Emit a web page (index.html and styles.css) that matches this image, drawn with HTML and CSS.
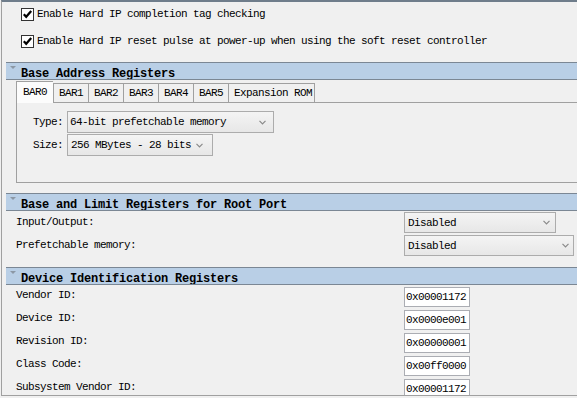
FILE: index.html
```html
<!DOCTYPE html>
<html lang="en">
<head>
    <meta charset="UTF-8" />
    <title>Hard IP Parameters</title>
    <link rel="stylesheet" href="styles.css">
</head>
<body>
    <div class="frame">
        <div class="checks">
            <label class="check">
                <svg class="box" width="13" height="13" viewBox="0 0 13 13"><rect x="0.5" y="0.5" width="12" height="12" fill="#fff" stroke="#333"/><path d="M2.8 6.2 L5.2 8.8 L10.2 3" fill="none" stroke="#000" stroke-width="2.2"/></svg>
                Enable Hard IP completion tag checking
            </label>
            <label class="check">
                <svg class="box" width="13" height="13" viewBox="0 0 13 13"><rect x="0.5" y="0.5" width="12" height="12" fill="#fff" stroke="#333"/><path d="M2.8 6.2 L5.2 8.8 L10.2 3" fill="none" stroke="#000" stroke-width="2.2"/></svg>
                Enable Hard IP reset pulse at power-up when using the soft reset controller
            </label>
        </div>

        <section class="group">
            <div class="group-head"><span class="twisty"></span>Base Address Registers</div>
            <div class="tabs">
                <span class="tab active">BAR0</span>
                <span class="tab">BAR1</span>
                <span class="tab">BAR2</span>
                <span class="tab">BAR3</span>
                <span class="tab">BAR4</span>
                <span class="tab">BAR5</span>
                <span class="tab">Expansion ROM</span>
            </div>
            <div class="tab-panel">
                <div class="field">
                    <span>Type:</span>
                    <div class="select select-type">64-bit prefetchable memory<svg width="7" height="5" viewBox="0 0 7 5"><path d="M0.5 0.8 L3.5 3.8 L6.5 0.8" fill="none" stroke="#8a8a8a" stroke-width="1.2"/></svg></div>
                </div>
                <div class="field">
                    <span>Size:</span>
                    <div class="select select-size">256 MBytes - 28 bits<svg width="7" height="5" viewBox="0 0 7 5"><path d="M0.5 0.8 L3.5 3.8 L6.5 0.8" fill="none" stroke="#8a8a8a" stroke-width="1.2"/></svg></div>
                </div>
            </div>
        </section>

        <section class="group">
            <div class="group-head"><span class="twisty"></span>Base and Limit Registers for Root Port</div>
            <div class="group-body">
                <div class="row">
                    <span class="row-label">Input/Output:</span>
                    <div class="select select-io">Disabled<svg width="7" height="5" viewBox="0 0 7 5"><path d="M0.5 0.8 L3.5 3.8 L6.5 0.8" fill="none" stroke="#8a8a8a" stroke-width="1.2"/></svg></div>
                </div>
                <div class="row">
                    <span class="row-label">Prefetchable memory:</span>
                    <div class="select select-pref">Disabled<svg width="7" height="5" viewBox="0 0 7 5"><path d="M0.5 0.8 L3.5 3.8 L6.5 0.8" fill="none" stroke="#8a8a8a" stroke-width="1.2"/></svg></div>
                </div>
            </div>
        </section>

        <section class="group">
            <div class="group-head"><span class="twisty"></span>Device Identification Registers</div>
            <div class="group-body ids">
                <div class="row"><span class="row-label">Vendor ID:</span><div class="hexbox">0x00001172</div></div>
                <div class="row"><span class="row-label">Device ID:</span><div class="hexbox">0x0000e001</div></div>
                <div class="row"><span class="row-label">Revision ID:</span><div class="hexbox">0x00000001</div></div>
                <div class="row"><span class="row-label">Class Code:</span><div class="hexbox">0x00ff0000</div></div>
                <div class="row"><span class="row-label">Subsystem Vendor ID:</span><div class="hexbox">0x00001172</div></div>
            </div>
        </section>
    </div>
</body>
</html>
```

FILE: styles.css
```css
body {
    margin: 0;
    background: #f0f0f0;
    font-family: "Liberation Mono", "DejaVu Sans Mono", monospace;
    font-size: 11px;
    letter-spacing: -0.6px;
    color: #000;
    overflow: hidden;
}
.frame {
    height: 396px;
    box-sizing: border-box;
    margin-left: 1px;
    border-left: 1px solid #a0a0a0;
    border-top: 2px solid #6f7d8b;
    border-bottom: 1px solid #a0a0a0;
    padding-left: 4px;
    overflow: hidden;
}
.checks {
    display: flex;
    flex-direction: column;
    gap: 3px;
    padding-left: 15px;
}
.check {
    display: flex;
    align-items: center;
    gap: 3px;
    height: 24px;
    white-space: nowrap;
}
.group {
    margin-top: 10px;
}
.checks + .group {
    margin-top: 9px;
}
.group-head {
    position: relative;
    height: 18px;
    box-sizing: border-box;
    border-top: 1px solid #7b8794;
    border-bottom: 1px solid #7b8794;
    background: #b9cfe6;
    padding: 3px 0 0 15px;
    line-height: 16px;
    font-size: 12px;
    font-weight: bold;
    letter-spacing: -0.2px;
    white-space: nowrap;
    overflow: hidden;
}
.twisty {
    position: absolute;
    left: 4px;
    top: 3px;
    border-left: 3px solid transparent;
    border-right: 3px solid transparent;
    border-top: 3px solid #8c98a5;
}
.tabs {
    display: flex;
    align-items: flex-end;
    height: 22px;
    margin-left: 10px;
}
.tab {
    height: 19px;
    box-sizing: border-box;
    border: 1px solid #a0a0a0;
    border-bottom: none;
    border-right: none;
    padding: 0 5px;
    line-height: 18px;
    white-space: nowrap;
}
.tab:last-child {
    border-right: 1px solid #a0a0a0;
    padding-right: 2px;
}
.tab.active {
    position: relative;
    height: 22px;
    margin-bottom: -1px;
    padding: 0 6px;
    line-height: 20px;
    background: #fcfcfc;
}
.tab-panel {
    height: 81px;
    box-sizing: border-box;
    margin-left: 10px;
    border: 1px solid #a0a0a0;
    border-right: none;
    padding: 8px 0 0 16px;
    display: flex;
    flex-direction: column;
    gap: 1px;
}
.field {
    display: flex;
    align-items: center;
    gap: 4px;
}
.select {
    height: 22px;
    box-sizing: border-box;
    border: 1px solid #acacac;
    background: linear-gradient(#f4f4f4, #e7e7e7);
    display: flex;
    align-items: center;
    justify-content: space-between;
    padding: 0 7px 0 2px;
    white-space: nowrap;
}
.select-type { width: 207px; }
.select-size { width: 146px; padding-left: 3px; padding-right: 9px; }
.select-io { width: 152px; height: 21px; padding-left: 3px; padding-right: 5px; }
.select-pref { width: 170px; height: 21px; padding-left: 3px; padding-right: 4px; }
.group-body {
    padding-left: 10px;
}
.row {
    display: flex;
    align-items: center;
    height: 23px;
}
.row-label {
    width: 388px;
    flex-shrink: 0;
    padding-bottom: 2px;
}
.ids .row {
    align-items: flex-start;
}
.ids .row-label {
    padding-top: 4px;
}
.hexbox {
    width: 66px;
    height: 20px;
    margin-top: 2px;
    box-sizing: border-box;
    border: 1px solid #abadb3;
    background: #fff;
    padding-left: 1px;
    line-height: 18px;
}
```
